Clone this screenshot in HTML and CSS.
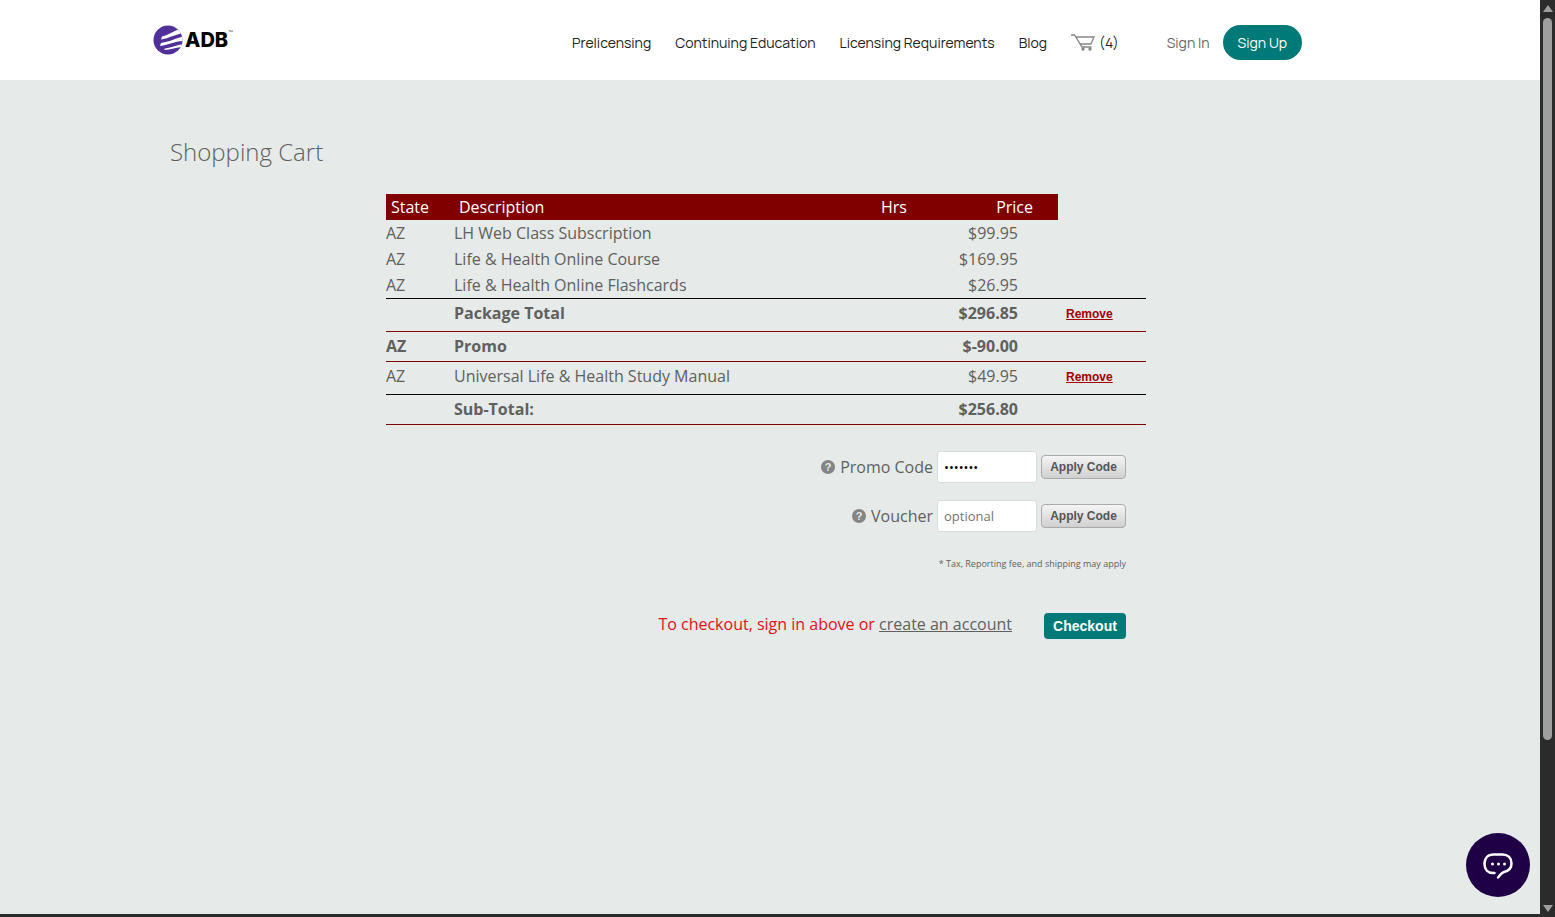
FILE: index.html
```html
<!DOCTYPE html>
<html lang="en">
<head>
    <meta charset="UTF-8">
    <meta name="viewport" content="width=device-width, initial-scale=1.0">
    <title>Shopping Cart</title>
    <link rel="stylesheet" href="styles.css">
</head>
<body>
    <div class="window">
        <div class="page">
            <header class="site-header">
                <div class="header-inner">
                    <a href="#" class="logo" aria-label="ADB">
                        <svg class="logo-mark" viewBox="0 0 30 30" width="30" height="30">
                            <defs>
                                <clipPath id="disc"><circle cx="15" cy="15" r="14.5"/></clipPath>
                            </defs>
                            <g clip-path="url(#disc)">
                                <rect width="30" height="30" fill="#52309a"/>
                                <path d="M30 3 L24 5 C19 7 15 10 9 11.500 L8 14.500 C15 13.500 19 10.500 30 8Z" fill="#fff"/>
                                <path d="M30 11.500 C23 13 18 16.500 8 18 L7 21 C16 20 21 16.500 30 16Z" fill="#fff"/>
                                <path d="M30 19 C24 20 19 22.500 12 23.500 L11 25 C18 24.500 23 22.500 30 22Z" fill="#fff"/>
                            </g>
                        </svg>
                        <span class="logo-text">ADB</span><span class="logo-tm">™</span>
                    </a>
                    <nav class="main-nav">
                        <a href="#">Prelicensing</a>
                        <a href="#">Continuing Education</a>
                        <a href="#">Licensing Requirements</a>
                        <a href="#">Blog</a>
                        <a href="#" class="cart-link">
                            <svg viewBox="0 0 24 18" width="24" height="18" fill="none" stroke="#858585" stroke-width="1.300">
                                <path d="M0 1 H3.500 L11 13 H20.500"/>
                                <path d="M5 3 H23 L20 10 H9"/>
                                <circle cx="12" cy="15" r="1" fill="#858585"/>
                                <circle cx="19" cy="15" r="1" fill="#858585"/>
                            </svg>
                            <span>(4)</span>
                        </a>
                    </nav>
                    <div class="account">
                        <a href="#" class="sign-in">Sign In</a>
                        <a href="#" class="sign-up">Sign Up</a>
                    </div>
                </div>
            </header>

            <main class="content">
                <h1>Shopping Cart</h1>
                <div class="cart">
                    <table class="cart-table">
                        <colgroup>
                            <col class="col-state">
                            <col class="col-desc">
                            <col class="col-hrs">
                            <col class="col-price">
                            <col class="col-action">
                        </colgroup>
                        <thead>
                            <tr>
                                <th>State</th>
                                <th>Description</th>
                                <th>Hrs</th>
                                <th class="price">Price</th>
                                <td></td>
                            </tr>
                        </thead>
                        <tbody>
                            <tr>
                                <td>AZ</td>
                                <td>LH Web Class Subscription</td>
                                <td></td>
                                <td class="price">$99.95</td>
                                <td></td>
                            </tr>
                            <tr>
                                <td>AZ</td>
                                <td>Life &amp; Health Online Course</td>
                                <td></td>
                                <td class="price">$169.95</td>
                                <td></td>
                            </tr>
                            <tr class="line-dark">
                                <td>AZ</td>
                                <td>Life &amp; Health Online Flashcards</td>
                                <td></td>
                                <td class="price">$26.95</td>
                                <td></td>
                            </tr>
                            <tr class="strong tall line-red">
                                <td></td>
                                <td>Package Total</td>
                                <td></td>
                                <td class="price">$296.85</td>
                                <td class="action"><button type="button" class="remove">Remove</button></td>
                            </tr>
                            <tr class="strong total line-red">
                                <td>AZ</td>
                                <td>Promo</td>
                                <td></td>
                                <td class="price">$-90.00</td>
                                <td></td>
                            </tr>
                            <tr class="tall line-dark">
                                <td>AZ</td>
                                <td>Universal Life &amp; Health Study Manual</td>
                                <td></td>
                                <td class="price">$49.95</td>
                                <td class="action"><button type="button" class="remove">Remove</button></td>
                            </tr>
                            <tr class="strong total line-red">
                                <td></td>
                                <td>Sub-Total:</td>
                                <td></td>
                                <td class="price">$256.80</td>
                                <td></td>
                            </tr>
                        </tbody>
                    </table>

                    <form class="codes">
                        <div class="code-row">
                            <span class="help">?</span>
                            <label for="promo">Promo Code</label>
                            <input type="password" id="promo" value="promo90">
                            <button type="button" class="apply">Apply Code</button>
                        </div>
                        <div class="code-row">
                            <span class="help">?</span>
                            <label for="voucher">Voucher</label>
                            <input type="text" id="voucher" placeholder="optional">
                            <button type="button" class="apply">Apply Code</button>
                        </div>
                        <p class="note">* Tax, Reporting fee, and shipping may apply</p>
                        <div class="checkout-row">
                            <p class="message">To checkout, sign in above or <a href="#">create an account</a></p>
                            <button type="button" class="checkout">Checkout</button>
                        </div>
                    </form>
                </div>
            </main>

            <button type="button" class="chat" aria-label="Chat">
                <svg viewBox="0 0 32 32" width="32" height="32" fill="none" stroke="#fff" stroke-width="2.500" stroke-linecap="round" stroke-linejoin="round">
                    <path d="M12.500 24 H11 C6 24 2.500 20.500 2.500 15 C2.500 9 6 5.500 11.500 5.500 H20.500 C26 5.500 29.500 9 29.500 14.500 C29.500 19.500 26.500 22 22 23 C19.500 23.800 18 26 16 28.500"/>
                    <g fill="#fff" stroke="none">
                        <circle cx="10.500" cy="15" r="1.500"/>
                        <circle cx="16.500" cy="15" r="1.500"/>
                        <circle cx="22.500" cy="15" r="1.500"/>
                    </g>
                </svg>
            </button>
        </div>

        <div class="scrollbar">
            <span class="arrow-up"></span>
            <div class="track"><div class="thumb"></div></div>
            <span class="arrow-down"></span>
        </div>
    </div>
</body>
</html>
```
FILE: styles.css
```css
* {
    box-sizing: border-box;
}
body {
    margin: 0;
    font-family: "Open Sans", sans-serif;
    font-size: 16px;
    line-height: 26px;
    color: #5f6160;
    background-color: #2b2b2b;
}
h1, p {
    margin: 0;
}
button {
    cursor: pointer;
}
.window {
    display: flex;
    height: 100vh;
}
.page {
    position: relative;
    flex: 1;
    margin-bottom: 3px;
    overflow: hidden;
    background-color: #e6eae8;
}

/* Header */
.site-header {
    background-color: #fff;
    padding: 0 24px;
}
.header-inner {
    display: flex;
    align-items: center;
    max-width: 1234px;
    height: 80px;
    margin: 0 auto;
    padding-right: 85px;
    padding-top: 5px;
    font-family: Manrope, Inter, sans-serif;
    font-size: 14px;
    font-weight: 400;
}
.header-inner a {
    color: #222;
    text-decoration: none;
}
.logo {
    display: flex;
    align-items: center;
    margin-right: auto;
    padding-bottom: 5px;
}
.logo-text {
    margin-left: 2px;
    font-family: Inter, sans-serif;
    font-size: 20px;
    font-weight: 800;
}
.header-inner .logo {
    color: #000;
}
.logo-tm {
    align-self: flex-start;
    font-size: 5px;
    line-height: 16px;
}
.main-nav {
    display: flex;
    align-items: center;
    gap: 24px;
}
.cart-link {
    display: flex;
    align-items: center;
    gap: 4px;
}
.account {
    display: flex;
    align-items: center;
    gap: 13px;
    margin-left: 48px;
}
.header-inner .sign-in {
    color: #666;
}
.header-inner .sign-up {
    padding: 0 15px;
    border-radius: 18px;
    background-color: #007a78;
    color: #fff;
    line-height: 35px;
}

/* Cart */
.content {
    max-width: 1200px;
    margin: 0 auto;
    padding-top: 55px;
}
h1 {
    font-size: 24px;
    font-weight: 300;
    line-height: 34px;
}
.cart {
    max-width: 768px;
    margin: 25px auto 0;
    padding-right: 8px;
}
.cart-table {
    width: 100%;
    table-layout: fixed;
    border-spacing: 0;
}
.col-state {
    width: 68px;
}
.col-hrs {
    width: 80px;
}
.col-price {
    width: 102px;
}
.col-action {
    width: 88px;
}
th {
    padding: 0 5px;
    background-color: #800000;
    color: #fff;
    font-weight: 400;
    text-align: left;
}
td {
    padding: 0;
}
th.price {
    padding-right: 25px;
    text-align: right;
}
td.price {
    padding-right: 40px;
    text-align: right;
}
.strong td {
    font-weight: 700;
}
.tall td {
    padding-top: 1px;
    padding-bottom: 5px;
}
.total td {
    padding-top: 1px;
    padding-bottom: 2px;
}
.line-dark td {
    border-bottom: 1px solid #000;
}
.line-red td {
    border-bottom: 1px solid #800000;
}
td.action {
    padding-left: 8px;
}
.remove {
    display: block;
    padding: 3px 0 0;
    border: none;
    background: none;
    color: #a00000;
    font: bold 12px/23px "Liberation Sans", Arial, sans-serif;
    text-decoration: underline;
}

/* Promo code and voucher */
.codes {
    display: flex;
    flex-direction: column;
    align-items: flex-end;
    gap: 17px;
    padding: 26px 20px 0 0;
}
.code-row {
    display: flex;
    align-items: center;
}
.help {
    width: 14px;
    height: 14px;
    margin-right: 5px;
    border-radius: 50%;
    background-color: #858585;
    color: #e6eae8;
    font: bold 11px/14px "Liberation Sans", Arial, sans-serif;
    text-align: center;
}
.code-row label {
    margin-right: 4px;
}
.code-row input {
    width: 100px;
    height: 32px;
    margin-right: 4px;
    padding: 0 6px;
    border: 1px solid #d8dcda;
    border-radius: 3px;
    background-color: #fff;
    color: #000;
    font-family: "Open Sans", sans-serif;
    font-size: 13px;
}
.apply {
    width: 85px;
    height: 24px;
    padding: 0;
    border: 1px solid #aaa;
    border-radius: 4px;
    background: linear-gradient(#f4f4f4, #d0d0d0);
    color: #555;
    font: bold 12px "Liberation Sans", Arial, sans-serif;
}
.note {
    margin-top: 8px;
    font-size: 9px;
    line-height: 14px;
}
.checkout-row {
    display: flex;
    align-items: flex-start;
    gap: 32px;
    margin-top: 23px;
}
.message {
    color: #e3101a;
}
.message a {
    color: #5f6160;
}
.checkout {
    width: 82px;
    height: 26px;
    margin-top: 2px;
    padding: 0;
    border: none;
    border-radius: 4px;
    background-color: #007a78;
    color: #fff;
    font: bold 14px "Liberation Sans", Arial, sans-serif;
}

/* Chat launcher */
.chat {
    position: absolute;
    right: 10px;
    bottom: 17px;
    display: flex;
    align-items: center;
    justify-content: center;
    width: 64px;
    height: 64px;
    padding: 0;
    border: none;
    border-radius: 50%;
    background-color: #1f0047;
}

/* Scrollbar */
.scrollbar {
    display: flex;
    flex-direction: column;
    align-items: center;
    width: 15px;
    padding: 5px 0;
}
.arrow-up,
.arrow-down {
    border: 5px solid transparent;
}
.arrow-up {
    border-top: none;
    border-bottom: 7px solid #9f9f9f;
}
.arrow-down {
    border-bottom: none;
    border-top: 7px solid #9f9f9f;
}
.track {
    flex: 1;
    width: 9px;
    padding: 6px 0;
}
.thumb {
    height: 82%;
    border-radius: 5px;
    background-color: #9f9f9f;
}
```
